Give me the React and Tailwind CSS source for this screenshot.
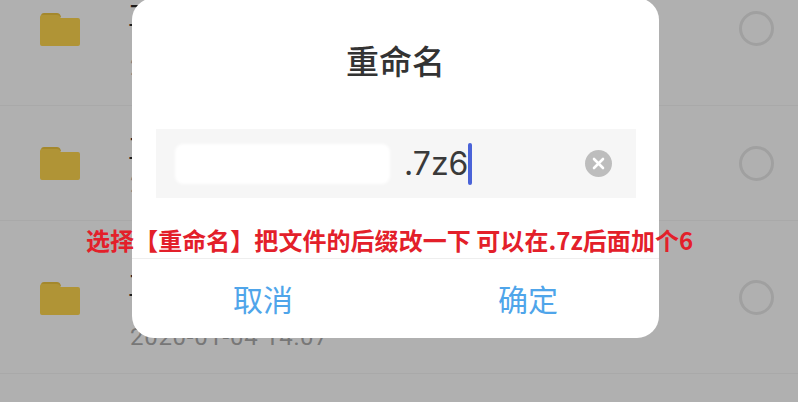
const cjk = "font-['Noto_Sans_CJK_SC','Noto_Sans',sans-serif]";

function Folder() {
  return (
    <svg width="40" height="34" viewBox="0 0 40 34" className="shrink-0">
      <path d="M1 4a3 3 0 0 1 3-3h13c2 0 3 1 3.500 2.500L21 5H1z" fill="#a4882c" />
      <path d="M0 5a2 2 0 0 1 2-2h15c2 0 3 1 3.500 2.500L21 6h17a2 2 0 0 1 2 2v24a2 2 0 0 1-2 2H2a2 2 0 0 1-2-2z" fill="#b09436" />
    </svg>
  );
}

function Row({ rowClass, folderClass, textClass, titleClass, circleClass, title }) {
  return (
    <div className={`flex items-start border-b border-[#a9a9a9] ${rowClass}`}>
      <div className={`ml-[40px] ${folderClass}`}>
        <Folder />
      </div>
      <div className={`ml-[50px] flex flex-col flex-1 ${textClass}`}>
        <div className={`ml-[-2px] text-[28px] leading-[28px] text-[#1c1c1c] ${cjk} ${titleClass}`}>{title}</div>
        <div className="text-[24px] leading-[30px] text-[#777777] font-['Roboto',sans-serif] tracking-[0.72px]">2020-01-04 14:07</div>
      </div>
      <div className={`mr-[24px] w-[35px] h-[35px] rounded-full border-[3px] border-[#a0a0a0] ${circleClass}`} />
    </div>
  );
}

export default function App() {
  return (
    <div className={`relative w-[798px] h-[402px] overflow-hidden bg-[#b0b0b0] ${cjk}`}>
      <div className="flex flex-col">
        <Row rowClass="h-[106px]" folderClass="mt-[12px]" textClass="mt-0" titleClass="h-[52px]" circleClass="mt-[11px]" title="工" />
        <Row rowClass="h-[115px]" folderClass="mt-[40px]" textClass="mt-[27px]" titleClass="h-[36px]" circleClass="mt-[40px]" title="工" />
        <Row rowClass="h-[153px]" folderClass="mt-[60px]" textClass="mt-[49px]" titleClass="h-[52px]" circleClass="mt-[59px]" title="工" />
      </div>

      <div className="absolute left-[132px] top-[-2px] w-[527px] h-[340px] rounded-[22px] bg-white flex flex-col">
        <div className="h-[131px] pt-[39px] text-center text-[33px] leading-[46px] font-medium text-[#333333]">重命名</div>
        <div className="ml-[24px] mr-[23px] h-[69px] bg-[#f6f6f6] flex items-center pl-[19px] pr-[24px]">
          <div className="w-[215px] h-[40px] rounded-[8px] bg-white blur-[1.500px] shrink-0" />
          <span className="ml-[14px] text-[32px] leading-[40px] text-[#3a3a3a] font-['Inter',sans-serif]">.7z6</span>
          <div className="w-[3.500px] h-[42px] rounded-full bg-[#4a63d8]" />
          <div className="ml-auto w-[27px] h-[27px] rounded-full bg-[#bdbdbd] flex items-center justify-center">
            <svg width="13" height="13" viewBox="0 0 13 13">
              <path d="M2 2l9 9M11 2l-9 9" stroke="#ffffff" strokeWidth="2.600" strokeLinecap="round" />
            </svg>
          </div>
        </div>
        <div className="mt-[60px] border-t border-[#eeeeee] flex-1 flex items-center text-[#4fa5ea] text-[30px] leading-[40px] pb-[2px]">
          <div className="flex-1 text-center pr-[3px]">取消</div>
          <div className="flex-1 text-center">确定</div>
        </div>
      </div>

      <div className="absolute left-[86px] top-[223px] whitespace-nowrap text-[24px] leading-[34px] font-bold tracking-[0.05px] text-[#e3202a]">
        选择【重命名】把文件的后缀改一下 可以在.7z后面加个6
      </div>
    </div>
  );
}
